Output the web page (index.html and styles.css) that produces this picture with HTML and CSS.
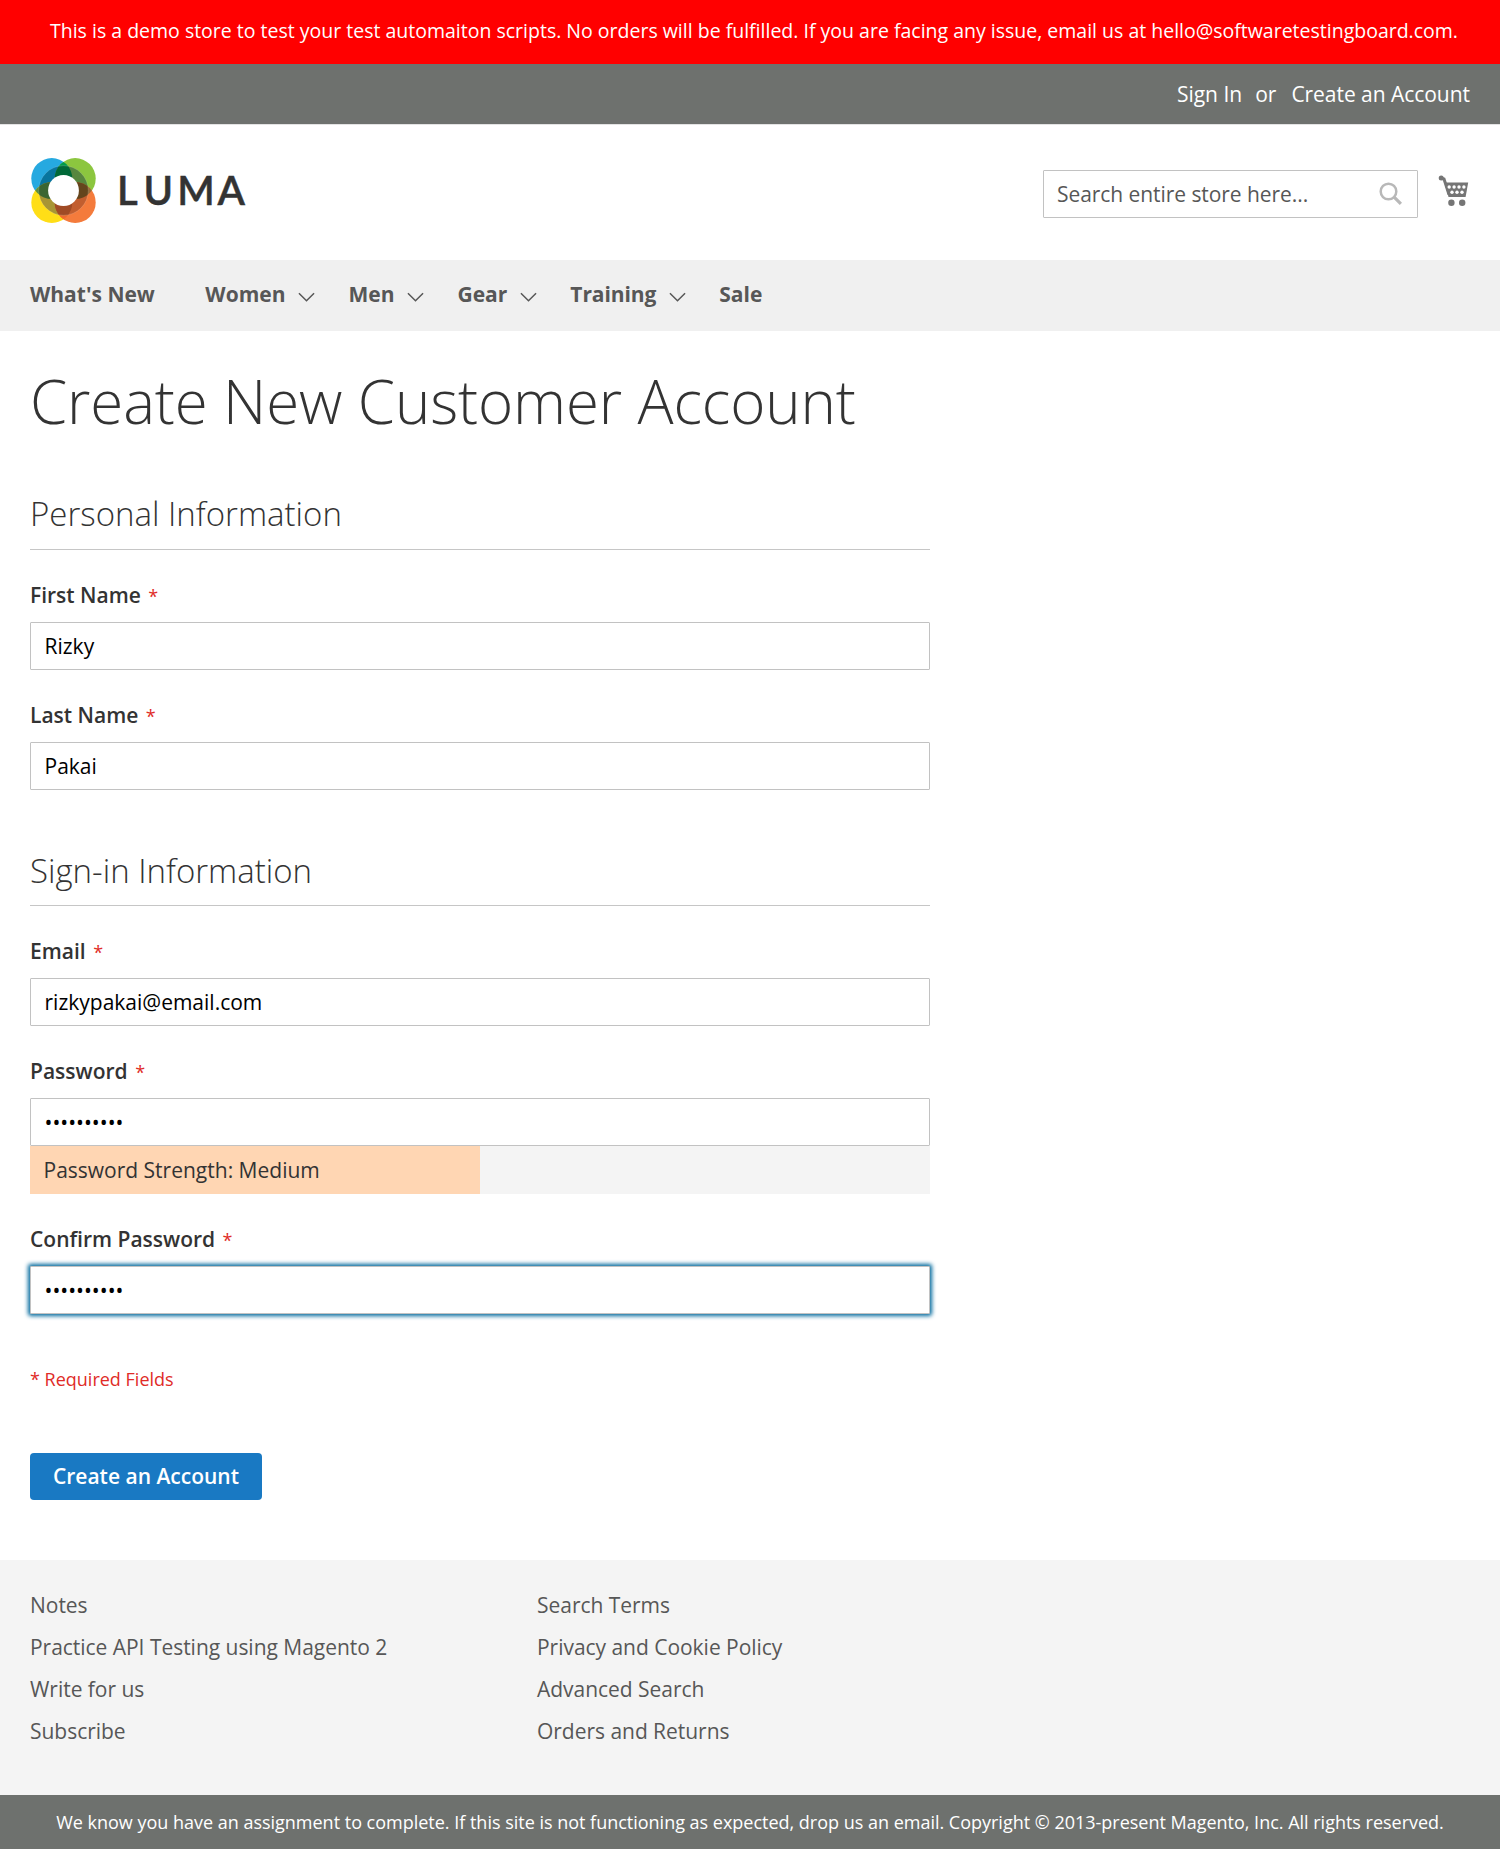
FILE: index.html
```html
<!DOCTYPE html>
<html lang="en">
<head>
<meta charset="utf-8">
<title>Create New Customer Account</title>
<link rel="stylesheet" href="styles.css">
</head>
<body>
<div class="notice">This is a demo store to test your test automaiton scripts. No orders will be fulfilled. If you are facing any issue, email us at hello@softwaretestingboard.com.</div>
<div class="panel"><a class="panel-signin">Sign In</a><span class="panel-or">or</span><a class="panel-create">Create an Account</a></div>
<header class="header">
  <a class="logo">
    <svg width="222" height="66" viewBox="0 0 222 66" aria-label="LUMA">
      <defs>
        <clipPath id="tl"><circle cx="21.8" cy="20.6" r="20.5"/></clipPath>
        <clipPath id="tr"><circle cx="45.2" cy="20.6" r="20.5"/></clipPath>
        <clipPath id="bl"><circle cx="21.8" cy="44.4" r="20.5"/></clipPath>
        <clipPath id="br"><circle cx="45.2" cy="44.4" r="20.5"/></clipPath>
      </defs>
      <circle cx="21.8" cy="20.6" r="20.5" fill="#26a9e0"/>
      <circle cx="45.2" cy="20.6" r="20.5" fill="#8cc63f"/>
      <circle cx="21.8" cy="44.4" r="20.5" fill="#ffde17"/>
      <circle cx="45.2" cy="44.4" r="20.5" fill="#f47b3c"/>
      <g clip-path="url(#tl)"><circle cx="45.2" cy="20.6" r="20.5" fill="#009b4c"/><circle cx="21.8" cy="44.4" r="20.5" fill="#5f8f3b"/></g>
      <g clip-path="url(#br)"><circle cx="45.2" cy="20.6" r="20.5" fill="#9a6b3a"/><circle cx="21.8" cy="44.4" r="20.5" fill="#ef6a2c"/></g>
      <g clip-path="url(#tl)"><circle cx="33.5" cy="32.5" r="24.8" fill="#08759e"/></g>
      <g clip-path="url(#tr)"><circle cx="33.5" cy="32.5" r="24.8" fill="#57863e"/></g>
      <g clip-path="url(#bl)"><circle cx="33.5" cy="32.5" r="24.8" fill="#a89534"/></g>
      <g clip-path="url(#br)"><circle cx="33.5" cy="32.5" r="24.8" fill="#c25e2f"/></g>
      <g clip-path="url(#tl)"><g clip-path="url(#tr)"><circle cx="33.5" cy="32.5" r="24.8" fill="#006837"/></g><g clip-path="url(#bl)"><circle cx="33.5" cy="32.5" r="24.8" fill="#3b6632"/></g></g>
      <g clip-path="url(#br)"><g clip-path="url(#tr)"><circle cx="33.5" cy="32.5" r="24.8" fill="#64451d"/></g><g clip-path="url(#bl)"><circle cx="33.5" cy="32.5" r="24.8" fill="#a04b25"/></g></g>
      <circle cx="33.5" cy="32.5" r="24.8" fill="none" stroke="#fff" stroke-opacity=".25" stroke-width=".6"/>
      <circle cx="33.5" cy="32.5" r="15.4" fill="#fff"/>
      <text class="logo-text" y="46.6"><tspan x="87">L</tspan><tspan x="113.4">U</tspan><tspan x="147.2">M</tspan><tspan x="187.4">A</tspan></text>
    </svg>
  </a>
  <div class="header-tools">
    <div class="search">
      <span class="search-text">Search entire store here...</span>
      <svg width="24" height="24" viewBox="0 0 24 24"><circle cx="9.5" cy="9.5" r="7.8" fill="none" stroke="#b8b8b8" stroke-width="2.5"/><path d="M15.1 15.1 21.9 21.8" stroke="#b8b8b8" stroke-width="3.2"/></svg>
    </div>
    <svg class="cart" width="32" height="34" viewBox="0 0 32 34">
      <path d="M3.3 4.2 6 5 11 20.5" fill="none" stroke="#757575" stroke-width="3"/>
      <circle cx="3.2" cy="4" r="2.5" fill="#757575"/>
      <path d="M6.5 8.4H30.2L27.6 23H10.5Z" fill="#757575"/>
      <g fill="#fff"><circle cx="11.2" cy="13" r="1.7"/><circle cx="16.1" cy="13" r="1.7"/><circle cx="21" cy="13" r="1.7"/><circle cx="25.9" cy="13" r="1.7"/><circle cx="14" cy="18.2" r="1.7"/><circle cx="19" cy="18.2" r="1.7"/><circle cx="24" cy="18.2" r="1.7"/></g>
      <circle cx="13.4" cy="28.8" r="3.2" fill="#757575"/><circle cx="24.2" cy="28.8" r="3.2" fill="#757575"/>
    </svg>
  </div>
</header>
<nav class="nav">
  <a class="nav-item nav-first">What's New</a>
  <a class="nav-item">Women<svg class="chev" viewBox="0 0 18 10"><path d="M1 1 9 9 17 1"/></svg></a>
  <a class="nav-item">Men<svg class="chev" viewBox="0 0 18 10"><path d="M1 1 9 9 17 1"/></svg></a>
  <a class="nav-item">Gear<svg class="chev" viewBox="0 0 18 10"><path d="M1 1 9 9 17 1"/></svg></a>
  <a class="nav-item nav-training">Training<svg class="chev" viewBox="0 0 18 10"><path d="M1 1 9 9 17 1"/></svg></a>
  <a class="nav-item">Sale</a>
</nav>
<main class="main">
  <h1 class="title">Create New Customer Account</h1>
  <form class="form">
    <section class="group">
      <h2 class="legend">Personal Information</h2>
      <div class="field"><label class="label">First Name<span class="star">*</span></label><input class="input" type="text" value="Rizky"></div>
      <div class="field"><label class="label">Last Name<span class="star">*</span></label><input class="input" type="text" value="Pakai"></div>
    </section>
    <section class="group">
      <h2 class="legend legend-signin">Sign-in Information</h2>
      <div class="field"><label class="label">Email<span class="star">*</span></label><input class="input" type="text" value="rizkypakai@email.com"></div>
      <div class="field"><label class="label">Password<span class="star">*</span></label><input class="input" type="password" value="abcdefgh12">
        <div class="meter"><div class="meter-fill">Password Strength: Medium</div></div></div>
      <div class="field"><label class="label">Confirm Password<span class="star">*</span></label><input class="input input-active" type="password" value="abcdefgh12"></div>
    </section>
    <p class="required">* Required Fields</p>
    <button class="submit" type="button">Create an Account</button>
  </form>
</main>
<footer class="footer">
  <ul class="links links-first"><li>Notes</li><li>Practice API Testing using Magento 2</li><li>Write for us</li><li>Subscribe</li></ul>
  <ul class="links"><li>Search Terms</li><li>Privacy and Cookie Policy</li><li>Advanced Search</li><li>Orders and Returns</li></ul>
</footer>
<div class="copyright">We know you have an assignment to complete. If this site is not functioning as expected, drop us an email. Copyright © 2013-present Magento, Inc. All rights reserved.</div>
</body>
</html>
```
FILE: styles.css
```css
* { box-sizing: border-box; }
body { margin: 0; font: 400 21px/30px "Open Sans", "Noto Sans", sans-serif; color: #333; background: #fff; }
.notice { height: 64px; padding: 16px 30px 0 38px; background: #f00; color: #fff; font-size: 19.5px; text-align: center; white-space: nowrap; }
.panel { height: 61px; padding: 15px 30px 0; background: #6e716e; border-bottom: 1px solid #e3e3e3; color: #fff; display: flex; justify-content: flex-end; white-space: nowrap; }
.panel-or { margin: 0 15px 0 13px; }
.panel-create { letter-spacing: -.04px; }
.header { height: 135px; padding: 0 30px; display: flex; justify-content: space-between; }
.logo { padding-top: 33px; }
.logo svg { display: block; }
.logo-text { font: 600 40px Lato, sans-serif; fill: #333; stroke: #333; stroke-width: .5; }
.header-tools { display: flex; gap: 20px; padding-top: 45px; }
.search { width: 375px; height: 48px; border: 1px solid #c2c2c2; border-radius: 1px; padding: 0 14px 0 13px; display: flex; align-items: center; justify-content: space-between; color: #575757; }
.search-text { letter-spacing: -.06px; }
.cart { margin-top: 4px; }
.nav { height: 71px; padding: 19px 30px 0; background: #f0f0f0; display: flex; gap: 33.5px; color: #575757; font-weight: 700; white-space: nowrap; }
.nav-item { display: flex; }
.nav-first { margin-right: 17px; }
.nav-training { letter-spacing: -.1px; }
.chev { width: 17px; height: 10px; margin: 13px 0 0 12.5px; fill: none; stroke: #575757; stroke-width: 1.6; }
.main { padding: 0 30px; height: 1229px; }
.title { margin: 0; padding-top: 37px; font-size: 60px; line-height: 66px; font-weight: 300; letter-spacing: -.12px; white-space: nowrap; }
.form { width: 900px; padding-top: 60px; }
.group { margin-bottom: 60px; }
.legend { margin: 0 0 30px; height: 56px; border-bottom: 1px solid #c6c6c6; font-size: 33px; line-height: 40px; font-weight: 300; }
.legend-signin { padding-top: 1px; }
.field { margin-bottom: 30px; }
.label { display: block; height: 42px; font-weight: 600; }
.star { margin-left: 7.5px; color: #e02b27; font-size: 18px; font-weight: 400; }
.input { display: block; width: 100%; height: 48px; margin: 0; padding: 0 13.5px; border: 1px solid #c2c2c2; border-radius: 1px; font: inherit; color: #000; background: #fff; outline: none; }
.input-active { box-shadow: 0 0 4.5px 1.5px #00699d; }
.meter { height: 48px; background: #f4f4f4; }
.meter-fill { width: 50%; height: 48px; padding: 9px 13.5px; background: #ffd6b3; }
.required { margin: -8px 0 61px; color: #e02b27; font-size: 18px; line-height: 26px; }
.submit { display: block; width: 232px; height: 47px; padding: 0 0 2px; border: 0; border-radius: 4px; background: #1979c3; color: #fff; font: 600 21px/24px "Open Sans", sans-serif; }
.footer { height: 235px; padding: 30px 30px 0; background: #f4f4f4; display: flex; color: #575757; }
.links { margin: 0; padding: 0; list-style: none; display: flex; flex-direction: column; gap: 12px; letter-spacing: -.03px; }
.links-first { width: 507px; }
.copyright { height: 54px; padding-top: 14px; background: #6e716e; color: #fff; font-size: 18px; line-height: 26px; text-align: center; white-space: nowrap; letter-spacing: -.01px; }
```
